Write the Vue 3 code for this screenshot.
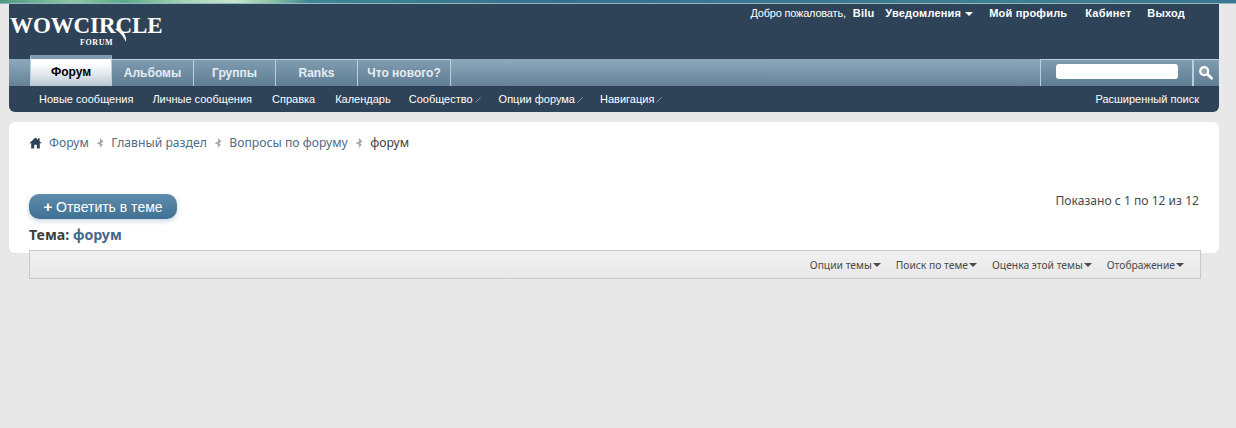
<script setup>
const tabs = [
  { label: 'Альбомы', w: 82 },
  { label: 'Группы', w: 82 },
  { label: 'Ranks', w: 82 },
  { label: 'Что нового?', w: 93 }
]
const subs = [
  { label: 'Новые сообщения', cls: 'tight' },
  { label: 'Личные сообщения' },
  { label: 'Справка' },
  { label: 'Календарь', cls: 'cal' },
  { label: 'Сообщество', cls: 'pop wide' },
  { label: 'Опции форума', cls: 'pop' },
  { label: 'Навигация', cls: 'pop' }
]
const crumbs = ['Форум', 'Главный раздел', 'Вопросы по форуму']
const tools = ['Опции темы', 'Поиск по теме', 'Оценка этой темы', 'Отображение']
</script>

<template>
  <div class="page">
    <div class="strip"></div>
    <div class="wrap">
      <header class="head">
        <div class="logo">
          <span class="logo-main">WOWCIRCLE</span>
          <svg class="logo-tail" width="24" height="15" viewBox="0 0 24 15">
            <path d="M0 1C4 4 8 7 11 14C12 9 9 4 4 0Z" fill="#fff" />
          </svg>
          <span class="logo-sub">FORUM</span>
        </div>
        <nav class="top">
          <span class="welcome">Добро пожаловать,</span>
          <a class="t-user">Bilu</a>
          <a class="t-notif">Уведомления<i class="caret-w"></i></a>
          <a class="t-prof">Мой профиль</a>
          <a class="t-cab">Кабинет</a>
          <a class="t-out">Выход</a>
        </nav>
      </header>
      <div class="nav">
        <div class="tab-active">Форум</div>
        <div v-for="t in tabs" :key="t.label" class="tab" :style="{ width: t.w + 'px' }">{{ t.label }}</div>
        <div class="search">
          <div class="s-box"><div class="s-input"></div></div>
          <div class="s-btn">
            <svg width="16" height="16" viewBox="0 0 16 16">
              <circle cx="6.2" cy="6.2" r="4" fill="#93a4b2" stroke="#fff" stroke-width="2.2" />
              <path d="M9.4 9.4L13.6 13.2" stroke="#fff" stroke-width="2.8" stroke-linecap="round" />
            </svg>
          </div>
        </div>
      </div>
      <div class="sub">
        <a v-for="s in subs" :key="s.label" class="sub-item" :class="s.cls">{{ s.label }}<svg v-if="s.cls && s.cls.startsWith('pop')" class="tick" width="6" height="6" viewBox="0 0 6 6"><path d="M0.5 5.5L5.5 0.5" stroke="#8496a8" stroke-width="1" /></svg></a>
        <a class="adv">Расширенный поиск</a>
      </div>

      <main class="card">
        <div class="crumbs">
          <svg class="home" width="13" height="12" viewBox="0 0 13 12">
            <path d="M6.5 0.5L0.3 6.3H2.2V11.5H5.2V7.8H7.8V11.5H10.8V6.3H12.7L10.6 4.3V1.2H9V2.8Z" fill="#2f4358" />
          </svg>
          <template v-for="c in crumbs" :key="c">
            <a class="crumb">{{ c }}</a>
            <svg class="sep" width="8" height="10" viewBox="0 0 8 10">
              <path d="M4 0L7.5 3.6L5 5.2L7 6.4L3.5 10L4 6.8L0.5 5.2L4 3.6Z" fill="#a8a8a8" />
            </svg>
          </template>
          <span class="crumb-last">форум</span>
        </div>
        <div class="actions">
          <div class="reply"><b class="plus">+</b> Ответить в теме</div>
          <div class="count">Показано с 1 по 12 из 12</div>
        </div>
        <h1 class="title">Тема: <span>форум</span></h1>
      </main>
      <div class="tools">
        <a v-for="t in tools" :key="t" class="tool">{{ t }}<i class="caret-d"></i></a>
      </div>
    </div>
  </div>
</template>

<style>
html, body { margin: 0; background: #e8e8e8; }
</style>

<style scoped>
.page {
  width: 1236px;
  height: 428px;
  overflow: hidden;
  background: #e8e8e8;
  font-family: "Liberation Sans", Arial, sans-serif;
}
.strip {
  height: 4px;
  box-sizing: border-box;
  border-bottom: 1px solid #8fb8c2;
  background: linear-gradient(90deg, #4f9a80 0, #8fc7a6 6%, #5ea98b 10%, #a6d5b8 15%, #c9e4cf 19%, #8cc2a8 22%, #3e8793 25%, #376f8c 45%, #3c7690 60%, #3f7f92 80%, #3b7890 100%);
}
.wrap { margin: 0 17px 0 9px; }
.head {
  height: 55px;
  background: #2f4358;
  display: flex;
  justify-content: space-between;
}
.logo {
  display: flex;
  flex-direction: column;
  font-family: "Liberation Serif", serif;
  font-weight: bold;
  color: #fff;
  padding: 9px 0 0 1px;
  position: relative;
}
.logo-main {
  font-size: 23px;
  line-height: 25px;
  letter-spacing: -0.1px;
}
.logo-tail {
  position: absolute;
  left: 106px;
  top: 24px;
}
.logo-sub {
  font-size: 8px;
  line-height: 10px;
  letter-spacing: 0.6px;
  margin: 0 0 0 70px;
}
.top {
  display: flex;
  align-items: flex-start;
  color: #fff;
  font-size: 11px;
  line-height: 13px;
  padding: 3px 34px 0 0;
  font-weight: bold;
  letter-spacing: 0.2px;
}
.welcome { font-weight: normal; letter-spacing: -0.2px; margin-right: 7px; }
.t-user { margin-right: 11px; }
.t-notif { margin-right: 16px; display: flex; align-items: center; }
.t-prof { margin-right: 18px; }
.t-cab { margin-right: 16px; }
.caret-w {
  display: inline-block;
  margin-left: 4px;
  border-left: 4px solid transparent;
  border-right: 4px solid transparent;
  border-top: 4px solid #fff;
}
.nav {
  height: 27px;
  display: flex;
  background: linear-gradient(#8ea9bc, #658298);
  padding-left: 21px;
  box-sizing: border-box;
}
.tab-active {
  width: 82px;
  height: 31px;
  margin-top: -4px;
  box-sizing: border-box;
  border-top: 4px solid #7f9bb0;
  border-right: 1px solid #b9cfdd;
  border-left: 1px solid #b9cfdd;
  background: linear-gradient(#fff 15%, #dfe6eb 60%, #b6c6d2);
  color: #000;
  font-size: 12px;
  font-weight: bold;
  text-align: center;
  line-height: 27px;
  position: relative;
  z-index: 1;
}
.tab {
  box-sizing: border-box;
  height: 27px;
  border-top: 1px solid #b9cfdd;
  border-right: 1px solid #b9cfdd;
  background: linear-gradient(#7f9cb1, #5f7d93);
  color: #e6edf2;
  font-size: 12px;
  font-weight: bold;
  text-align: center;
  line-height: 27px;
}
.search { display: flex; margin-left: auto; padding-right: 1px; }
.s-box {
  width: 153px;
  height: 27px;
  box-sizing: border-box;
  border: 1px solid #b9cfdd;
  border-bottom: 0;
  background: linear-gradient(#7f9cb1, #5f7d93);
  padding: 4px 0 0 15px;
}
.s-input { width: 122px; height: 15px; border-radius: 3px; background: #fff; }
.s-btn {
  width: 25px;
  height: 27px;
  box-sizing: border-box;
  border-top: 1px solid #b9cfdd;
  border-left: 1px solid #b9cfdd;
  background: linear-gradient(#7f9cb1, #5f7d93);
  display: flex;
  align-items: center;
  justify-content: center;
}
.sub {
  height: 26px;
  box-sizing: border-box;
  background: #2f4358;
  border-radius: 0 0 6px 6px;
  display: flex;
  align-items: center;
  padding: 0 20px 0 30px;
  color: #fff;
  font-size: 11px;
}
.sub-item { margin-right: 20px; position: relative; }
.sub-item.tight { margin-right: 19px; }
.sub-item.cal { margin-right: 18px; }
.sub-item.pop { margin-right: 17px; padding-right: 8px; }
.sub-item.wide { margin-right: 18px; }
.tick { position: absolute; right: 0; top: 4px; }
.adv { margin-left: auto; }
.card {
  margin-top: 10px;
  height: 131px;
  box-sizing: border-box;
  background: #fff;
  border-radius: 6px;
  padding: 12px 20px 0;
}
.crumbs {
  display: flex;
  align-items: center;
  height: 17px;
  font-family: "Noto Sans", sans-serif;
  font-size: 12.2px;
  color: #4f6d87;
}
.home { margin-right: 7px; }
.crumb { color: #4f6d87; }
.sep { margin: 1px 7.25px 0 7.25px; }
.crumb-last { color: #3e3e3e; }
.actions {
  display: flex;
  justify-content: space-between;
  margin-top: 43px;
  height: 25px;
}
.reply {
  width: 148px;
  height: 25px;
  box-sizing: border-box;
  border-radius: 10px;
  background: linear-gradient(#5f8cab, #3f7093);
  box-shadow: 0 2px 5px rgba(63, 112, 147, 0.3);
  color: #fff;
  font-size: 14px;
  line-height: 25px;
  text-align: center;
}
.plus { font-size: 15px; }
.count {
  font-family: "Noto Sans", sans-serif;
  font-size: 12.1px;
  color: #4a4a4a;
  line-height: 14px;
}
.title {
  margin: 7px 0 0;
  font-family: "Noto Sans", sans-serif;
  font-size: 14.2px;
  font-weight: bold;
  line-height: 17px;
  color: #3e3e3e;
}
.title span { color: #45688a; }
.tools {
  position: relative;
  margin: -3px 18px 0 20px;
  height: 29px;
  box-sizing: border-box;
  border: 1px solid #c8c8c8;
  background: linear-gradient(#f1f1f1, #e8e8e8);
  display: flex;
  justify-content: flex-end;
  align-items: center;
  padding: 1px 16px 0 0;
  font-family: "Noto Sans", sans-serif;
  font-size: 10.3px;
  color: #4a4a4a;
  gap: 15px;
}
.tool { display: flex; align-items: center; }
.caret-d {
  display: inline-block;
  margin-left: 1px;
  border-left: 4px solid transparent;
  border-right: 4px solid transparent;
  border-top: 4px solid #4a4a4a;
}
</style>
